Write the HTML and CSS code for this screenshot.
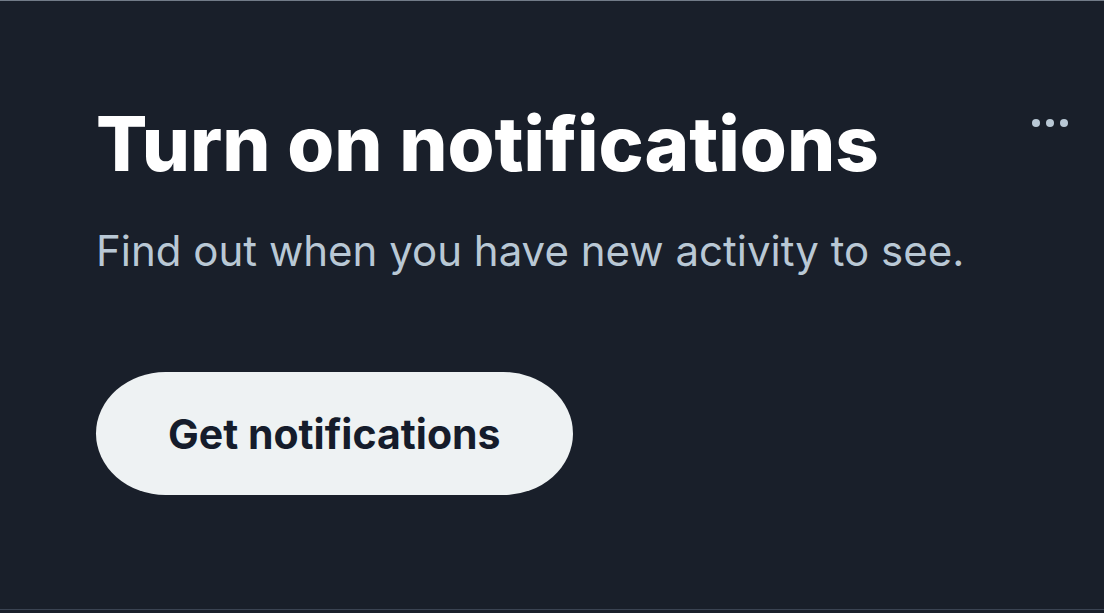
FILE: index.html
```html
<!DOCTYPE html>
<html lang="en">
<head>
  <meta charset="UTF-8">
  <meta name="viewport" content="width=device-width, initial-scale=1.0">
  <title>Turn on notifications</title>
  <link rel="stylesheet" href="styles.css">
</head>
<body>

  <section class="prompt">
    <div class="prompt-content">
      <h1>Turn on notifications</h1>
      <p>Find out when you have new activity to see.</p>
      <button class="enable-btn" type="button">Get notifications</button>
    </div>

    <button class="more-btn" type="button" aria-label="More">
      <svg viewBox="0 0 36 8" width="36" height="8" aria-hidden="true">
        <circle cx="4" cy="4" r="4"/>
        <circle cx="18" cy="4" r="4"/>
        <circle cx="32" cy="4" r="4"/>
      </svg>
    </button>
  </section>

</body>
</html>
```
FILE: styles.css
```css
* {
  box-sizing: border-box;
}

body {
  margin: 0;
  background-color: #191f2a;
  font-family: Inter, "Liberation Sans", Arial, sans-serif;
}

.prompt {
  display: flex;
  justify-content: space-between;
  align-items: flex-start;
  min-height: 610px;
  padding: 94px 36px 0 96px;
  border-top: 1px solid #727b88;
  border-bottom: 1px solid #3a4352;
}

h1 {
  margin: 0;
  color: #fff;
  font-size: 76px;
  font-weight: 800;
  line-height: 96px;
}

p {
  margin: 32px 0 0;
  color: #b9c8d5;
  font-size: 42px;
  line-height: 56px;
}

.enable-btn {
  margin-top: 93px;
  padding: 0 72px;
  height: 123px;
  border: none;
  border-radius: 70px / 62px;
  background-color: #eef2f3;
  color: #151c2b;
  font-family: inherit;
  font-size: 41px;
  font-weight: 700;
  cursor: pointer;
}

.more-btn {
  margin-top: 24px;
  padding: 0;
  border: none;
  background: none;
  cursor: pointer;
}

.more-btn svg {
  display: block;
  fill: #b9c8d5;
}
```
